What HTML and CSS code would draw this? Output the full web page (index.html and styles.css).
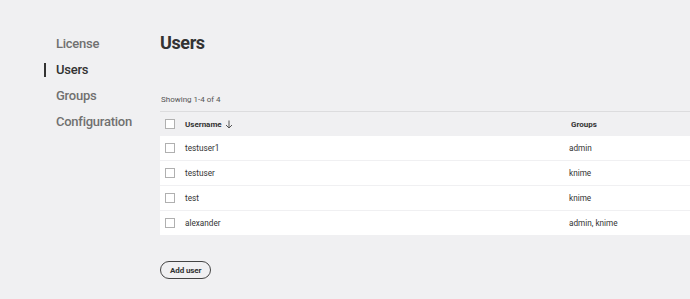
FILE: index.html
```html
<!DOCTYPE html>
<html>
<head>
<meta charset="utf-8">
<link rel="stylesheet" href="styles.css">
</head>
<body>
<div class="page">
  <nav class="side">
    <a class="nav-item">License</a>
    <a class="nav-item active">Users</a>
    <a class="nav-item">Groups</a>
    <a class="nav-item">Configuration</a>
  </nav>
  <main class="main">
    <h1 class="title">Users</h1>
    <div class="count">Showing 1-4 of 4</div>
    <div class="table">
      <div class="row head">
        <span class="cb"></span>
        <span class="c-user">Username <svg class="arrow" width="8" height="9" viewBox="0 0 8 9"><path d="M4 0.5V8M1 5l3 3 3-3" fill="none" stroke="#555" stroke-width="1"/></svg></span>
        <span class="c-group">Groups</span>
      </div>
      <div class="row">
        <span class="cb"></span><span class="c-user">testuser1</span><span class="c-group">admin</span>
      </div>
      <div class="row">
        <span class="cb"></span><span class="c-user">testuser</span><span class="c-group">knime</span>
      </div>
      <div class="row">
        <span class="cb"></span><span class="c-user">test</span><span class="c-group">knime</span>
      </div>
      <div class="row">
        <span class="cb"></span><span class="c-user">alexander</span><span class="c-group">admin, knime</span>
      </div>
    </div>
    <button class="btn">Add user</button>
  </main>
</div>
</body>
</html>
```

FILE: styles.css
```css
html, body {
  margin: 0;
  padding: 0;
  background: #f0f0f2;
  font-family: Roboto, "Noto Sans", sans-serif;
  color: #333;
}
.page {
  display: flex;
  padding-left: 44px;
}
.side {
  width: 116px;
  display: flex;
  flex-direction: column;
  padding-top: 34px;
}
.nav-item {
  display: block;
  position: relative;
  height: 26px;
  line-height: 20px;
  padding-left: 12px;
  font-size: 13px;
  letter-spacing: -0.25px;
  font-weight: 500;
  color: #707070;
}
.nav-item.active {
  color: #333;
}
.nav-item.active::before {
  content: "";
  position: absolute;
  left: 0;
  top: 3px;
  width: 2px;
  height: 14px;
  background: #333;
}
.main {
  flex: 1;
  padding-top: 32px;
}
.title {
  margin: 0;
  font-size: 18px;
  font-weight: 700;
  letter-spacing: -0.4px;
  line-height: 22px;
  color: #333;
}
.count {
  margin-top: 41px;
  padding-left: 1px;
  font-size: 8px;
  line-height: 10px;
  color: #555;
  padding-bottom: 6px;
  border-bottom: 1px solid #dcdcde;
}
.row {
  display: flex;
  align-items: center;
  height: 24px;
  background: #fff;
  border-bottom: 1px solid #f0f0f2;
  font-size: 8.2px;
  color: #333;
}
.row.head {
  background: transparent;
  font-size: 8px;
  font-weight: 700;
  border-bottom: none;
}
.cb {
  width: 8px;
  height: 8px;
  border: 1px solid #b0b0b0;
  margin-left: 5px;
  margin-right: 10px;
  background: #fff;
  flex: none;
}
.c-user {
  width: 384px;
  display: flex;
  align-items: center;
  gap: 3px;
}
.c-group {
  flex: 1;
}
.row.head .c-group {
  padding-left: 2px;
}
.btn {
  margin-top: 25px;
  height: 18px;
  padding: 0 9px;
  border: 1px solid #444;
  border-radius: 9px;
  background: transparent;
  font-family: Roboto, sans-serif;
  font-size: 8px;
  font-weight: 700;
  letter-spacing: -0.1px;
  color: #333;
}
```
